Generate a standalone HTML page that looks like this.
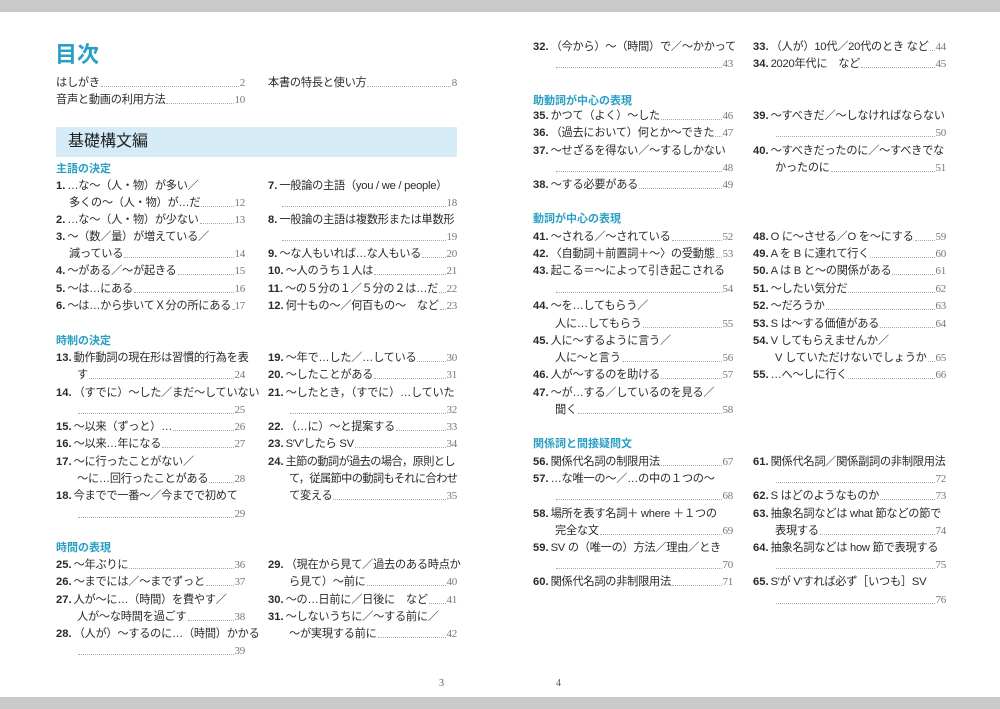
<!DOCTYPE html>
<html><head><meta charset="utf-8"><style>
*{margin:0;padding:0;box-sizing:border-box}
body{width:1000px;height:709px;background:#fff;position:relative;overflow:hidden;font-family:"Liberation Sans","Noto Sans CJK JP",sans-serif;color:#2a2a2a}
.bar{position:absolute;left:0;width:1000px;height:12px;background:#c9c9c9}
.r{position:absolute;height:16px;line-height:16px;font-size:11.2px;display:flex;white-space:nowrap;letter-spacing:-0.25px}
.r b{font-weight:bold;margin-right:2px;letter-spacing:0}
.d{flex:1;height:1px;border-bottom:1.3px dotted #aaa;margin:0 1px 4px 1px;align-self:flex-end}
.p{font-family:"Liberation Serif",serif;color:#777;font-size:11px}
.h{position:absolute;font-size:11px;color:#2a9fc4;font-weight:bold;line-height:14px}
.pg{position:absolute;top:678px;font-family:"Liberation Serif",serif;font-size:10px;color:#555}
</style></head><body>
<div class="bar" style="top:0"></div>
<div class="bar" style="top:697px"></div>

<div style="position:absolute;left:55px;top:41px;font-size:22px;color:#2a9fc4;font-weight:bold;line-height:28px">目次</div>
<div class="r" style="top:75px;left:56px;width:189px">はしがき<i class="d"></i><span class="p">2</span></div>
<div class="r" style="top:75px;left:268px;width:189px">本書の特長と使い方<i class="d"></i><span class="p">8</span></div>
<div class="r" style="top:92px;left:56px;width:189px">音声と動画の利用方法<i class="d"></i><span class="p">10</span></div>
<div style="position:absolute;left:56px;top:127px;width:401px;height:30px;background:#d5ebf8"></div>
<div style="position:absolute;left:68px;top:130px;font-size:16px;line-height:24px;color:#222">基礎構文編</div>

<div class="h" style="top:162px;left:56px">主語の決定</div>
<div class="r" style="top:178px;left:56px;width:189px"><b>1.</b>…な～（人・物）が多い／</div>
<div class="r" style="top:195px;left:69px;width:176px">多くの～（人・物）が…だ<i class="d"></i><span class="p">12</span></div>
<div class="r" style="top:212px;left:56px;width:189px"><b>2.</b>…な～（人・物）が少ない<i class="d"></i><span class="p">13</span></div>
<div class="r" style="top:229px;left:56px;width:189px"><b>3.</b>～（数／量）が増えている／</div>
<div class="r" style="top:246px;left:69px;width:176px">減っている<i class="d"></i><span class="p">14</span></div>
<div class="r" style="top:263px;left:56px;width:189px"><b>4.</b>～がある／～が起きる<i class="d"></i><span class="p">15</span></div>
<div class="r" style="top:281px;left:56px;width:189px"><b>5.</b>～は…にある<i class="d"></i><span class="p">16</span></div>
<div class="r" style="top:298px;left:56px;width:189px"><b>6.</b>～は…から歩いてＸ分の所にある<i class="d"></i><span class="p">17</span></div>
<div class="r" style="top:178px;left:268px;width:189px"><b>7.</b>一般論の主語（you / we / people）</div>
<div class="r" style="top:195px;left:281px;width:176px"><i class="d"></i><span class="p">18</span></div>
<div class="r" style="top:212px;left:268px;width:189px"><b>8.</b>一般論の主語は複数形または単数形</div>
<div class="r" style="top:229px;left:281px;width:176px"><i class="d"></i><span class="p">19</span></div>
<div class="r" style="top:246px;left:268px;width:189px"><b>9.</b>～な人もいれば…な人もいる<i class="d"></i><span class="p">20</span></div>
<div class="r" style="top:263px;left:268px;width:189px"><b>10.</b>～人のうち１人は<i class="d"></i><span class="p">21</span></div>
<div class="r" style="top:281px;left:268px;width:189px"><b>11.</b>～の５分の１／５分の２は…だ<i class="d"></i><span class="p">22</span></div>
<div class="r" style="top:298px;left:268px;width:189px"><b>12.</b>何十もの～／何百もの～　など<i class="d"></i><span class="p">23</span></div>

<div class="h" style="top:334px;left:56px">時制の決定</div>
<div class="r" style="top:350px;left:56px;width:189px"><b>13.</b>動作動詞の現在形は習慣的行為を表</div>
<div class="r" style="top:367px;left:77px;width:168px">す<i class="d"></i><span class="p">24</span></div>
<div class="r" style="top:385px;left:56px;width:189px"><b>14.</b>（すでに）～した／まだ～していない</div>
<div class="r" style="top:402px;left:77px;width:168px"><i class="d"></i><span class="p">25</span></div>
<div class="r" style="top:419px;left:56px;width:189px"><b>15.</b>～以来（ずっと）… <i class="d"></i><span class="p">26</span></div>
<div class="r" style="top:436px;left:56px;width:189px"><b>16.</b>～以来…年になる<i class="d"></i><span class="p">27</span></div>
<div class="r" style="top:454px;left:56px;width:189px"><b>17.</b>～に行ったことがない／</div>
<div class="r" style="top:471px;left:77px;width:168px">～に…回行ったことがある<i class="d"></i><span class="p">28</span></div>
<div class="r" style="top:488px;left:56px;width:189px"><b>18.</b>今までで一番～／今までで初めて</div>
<div class="r" style="top:506px;left:77px;width:168px"><i class="d"></i><span class="p">29</span></div>
<div class="r" style="top:350px;left:268px;width:189px"><b>19.</b>～年で…した／…している<i class="d"></i><span class="p">30</span></div>
<div class="r" style="top:367px;left:268px;width:189px"><b>20.</b>～したことがある<i class="d"></i><span class="p">31</span></div>
<div class="r" style="top:385px;left:268px;width:189px"><b>21.</b>～したとき，（すでに）…していた</div>
<div class="r" style="top:402px;left:289px;width:168px"><i class="d"></i><span class="p">32</span></div>
<div class="r" style="top:419px;left:268px;width:189px"><b>22.</b>（…に）～と提案する<i class="d"></i><span class="p">33</span></div>
<div class="r" style="top:436px;left:268px;width:189px"><b>23.</b>S′V′したら SV<i class="d"></i><span class="p">34</span></div>
<div class="r" style="top:454px;left:268px;width:189px;letter-spacing:-0.6px"><b>24.</b>主節の動詞が過去の場合，原則とし</div>
<div class="r" style="top:471px;left:289px;width:168px;letter-spacing:-0.6px">て，従属節中の動詞もそれに合わせ</div>
<div class="r" style="top:488px;left:289px;width:168px">て変える<i class="d"></i><span class="p">35</span></div>

<div class="h" style="top:541px;left:56px">時間の表現</div>
<div class="r" style="top:557px;left:56px;width:189px"><b>25.</b>～年ぶりに<i class="d"></i><span class="p">36</span></div>
<div class="r" style="top:574px;left:56px;width:189px"><b>26.</b>～までには／～までずっと<i class="d"></i><span class="p">37</span></div>
<div class="r" style="top:592px;left:56px;width:189px"><b>27.</b>人が～に…（時間）を費やす／</div>
<div class="r" style="top:609px;left:77px;width:168px">人が～な時間を過ごす<i class="d"></i><span class="p">38</span></div>
<div class="r" style="top:626px;left:56px;width:189px"><b>28.</b>（人が）～するのに…（時間）かかる</div>
<div class="r" style="top:643px;left:77px;width:168px"><i class="d"></i><span class="p">39</span></div>
<div class="r" style="top:557px;left:268px;width:189px"><b>29.</b>（現在から見て／過去のある時点か</div>
<div class="r" style="top:574px;left:289px;width:168px">ら見て）～前に<i class="d"></i><span class="p">40</span></div>
<div class="r" style="top:592px;left:268px;width:189px"><b>30.</b>～の…日前に／日後に　など<i class="d"></i><span class="p">41</span></div>
<div class="r" style="top:609px;left:268px;width:189px"><b>31.</b>～しないうちに／～する前に／</div>
<div class="r" style="top:626px;left:289px;width:168px">～が実現する前に<i class="d"></i><span class="p">42</span></div>

<!-- right page -->
<div class="r" style="top:39px;left:533px;width:200px"><b>32.</b>（今から）～（時間）で／～かかって</div>
<div class="r" style="top:56px;left:555px;width:178px"><i class="d"></i><span class="p">43</span></div>
<div class="r" style="top:39px;left:753px;width:193px"><b>33.</b>（人が）10代／20代のとき など<i class="d"></i><span class="p">44</span></div>
<div class="r" style="top:56px;left:753px;width:193px"><b>34.</b>2020年代に　など<i class="d"></i><span class="p">45</span></div>

<div class="h" style="top:94px;left:533px">助動詞が中心の表現</div>
<div class="r" style="top:108px;left:533px;width:200px"><b>35.</b>かつて（よく）～した<i class="d"></i><span class="p">46</span></div>
<div class="r" style="top:125px;left:533px;width:200px"><b>36.</b>（過去において）何とか～できた<i class="d"></i><span class="p">47</span></div>
<div class="r" style="top:143px;left:533px;width:200px"><b>37.</b>～せざるを得ない／～するしかない</div>
<div class="r" style="top:160px;left:555px;width:178px"><i class="d"></i><span class="p">48</span></div>
<div class="r" style="top:177px;left:533px;width:200px"><b>38.</b>～する必要がある<i class="d"></i><span class="p">49</span></div>
<div class="r" style="top:108px;left:753px;width:193px"><b>39.</b>～すべきだ／～しなければならない</div>
<div class="r" style="top:125px;left:775px;width:171px"><i class="d"></i><span class="p">50</span></div>
<div class="r" style="top:143px;left:753px;width:193px"><b>40.</b>～すべきだったのに／～すべきでな</div>
<div class="r" style="top:160px;left:775px;width:171px">かったのに<i class="d"></i><span class="p">51</span></div>

<div class="h" style="top:212px;left:533px">動詞が中心の表現</div>
<div class="r" style="top:229px;left:533px;width:200px"><b>41.</b>～される／～されている<i class="d"></i><span class="p">52</span></div>
<div class="r" style="top:246px;left:533px;width:200px"><b>42.</b>〈自動詞＋前置詞＋～〉の受動態<i class="d"></i><span class="p">53</span></div>
<div class="r" style="top:263px;left:533px;width:200px"><b>43.</b>起こる＝～によって引き起こされる</div>
<div class="r" style="top:281px;left:555px;width:178px"><i class="d"></i><span class="p">54</span></div>
<div class="r" style="top:298px;left:533px;width:200px"><b>44.</b>～を…してもらう／</div>
<div class="r" style="top:316px;left:555px;width:178px">人に…してもらう<i class="d"></i><span class="p">55</span></div>
<div class="r" style="top:333px;left:533px;width:200px"><b>45.</b>人に～するように言う／</div>
<div class="r" style="top:350px;left:555px;width:178px">人に～と言う<i class="d"></i><span class="p">56</span></div>
<div class="r" style="top:367px;left:533px;width:200px"><b>46.</b>人が～するのを助ける<i class="d"></i><span class="p">57</span></div>
<div class="r" style="top:385px;left:533px;width:200px"><b>47.</b>～が…する／しているのを見る／</div>
<div class="r" style="top:402px;left:555px;width:178px">聞く<i class="d"></i><span class="p">58</span></div>
<div class="r" style="top:229px;left:753px;width:193px"><b>48.</b>O に～させる／O を～にする<i class="d"></i><span class="p">59</span></div>
<div class="r" style="top:246px;left:753px;width:193px"><b>49.</b>A を B に連れて行く<i class="d"></i><span class="p">60</span></div>
<div class="r" style="top:263px;left:753px;width:193px"><b>50.</b>A は B と～の関係がある<i class="d"></i><span class="p">61</span></div>
<div class="r" style="top:281px;left:753px;width:193px"><b>51.</b>～したい気分だ<i class="d"></i><span class="p">62</span></div>
<div class="r" style="top:298px;left:753px;width:193px"><b>52.</b>～だろうか<i class="d"></i><span class="p">63</span></div>
<div class="r" style="top:316px;left:753px;width:193px"><b>53.</b>S は～する価値がある<i class="d"></i><span class="p">64</span></div>
<div class="r" style="top:333px;left:753px;width:193px"><b>54.</b>V してもらえませんか／</div>
<div class="r" style="top:350px;left:775px;width:171px">V していただけないでしょうか<i class="d"></i><span class="p">65</span></div>
<div class="r" style="top:367px;left:753px;width:193px"><b>55.</b>…へ～しに行く<i class="d"></i><span class="p">66</span></div>

<div class="h" style="top:437px;left:533px">関係詞と間接疑問文</div>
<div class="r" style="top:454px;left:533px;width:200px"><b>56.</b>関係代名詞の制限用法<i class="d"></i><span class="p">67</span></div>
<div class="r" style="top:471px;left:533px;width:200px"><b>57.</b>…な唯一の～／…の中の１つの～</div>
<div class="r" style="top:488px;left:555px;width:178px"><i class="d"></i><span class="p">68</span></div>
<div class="r" style="top:506px;left:533px;width:200px"><b>58.</b>場所を表す名詞＋ where ＋１つの</div>
<div class="r" style="top:523px;left:555px;width:178px">完全な文<i class="d"></i><span class="p">69</span></div>
<div class="r" style="top:540px;left:533px;width:200px"><b>59.</b>SV の（唯一の）方法／理由／とき</div>
<div class="r" style="top:557px;left:555px;width:178px"><i class="d"></i><span class="p">70</span></div>
<div class="r" style="top:574px;left:533px;width:200px"><b>60.</b>関係代名詞の非制限用法<i class="d"></i><span class="p">71</span></div>
<div class="r" style="top:454px;left:753px;width:193px"><b>61.</b>関係代名詞／関係副詞の非制限用法</div>
<div class="r" style="top:471px;left:775px;width:171px"><i class="d"></i><span class="p">72</span></div>
<div class="r" style="top:488px;left:753px;width:193px"><b>62.</b>S はどのようなものか<i class="d"></i><span class="p">73</span></div>
<div class="r" style="top:506px;left:753px;width:193px"><b>63.</b>抽象名詞などは what 節などの節で</div>
<div class="r" style="top:523px;left:775px;width:171px">表現する<i class="d"></i><span class="p">74</span></div>
<div class="r" style="top:540px;left:753px;width:193px"><b>64.</b>抽象名詞などは how 節で表現する</div>
<div class="r" style="top:557px;left:775px;width:171px"><i class="d"></i><span class="p">75</span></div>
<div class="r" style="top:574px;left:753px;width:193px"><b>65.</b>S′が V′すれば必ず［いつも］SV</div>
<div class="r" style="top:592px;left:775px;width:171px"><i class="d"></i><span class="p">76</span></div>

<div class="pg" style="left:439px">3</div>
<div class="pg" style="left:556px">4</div>
</body></html>
